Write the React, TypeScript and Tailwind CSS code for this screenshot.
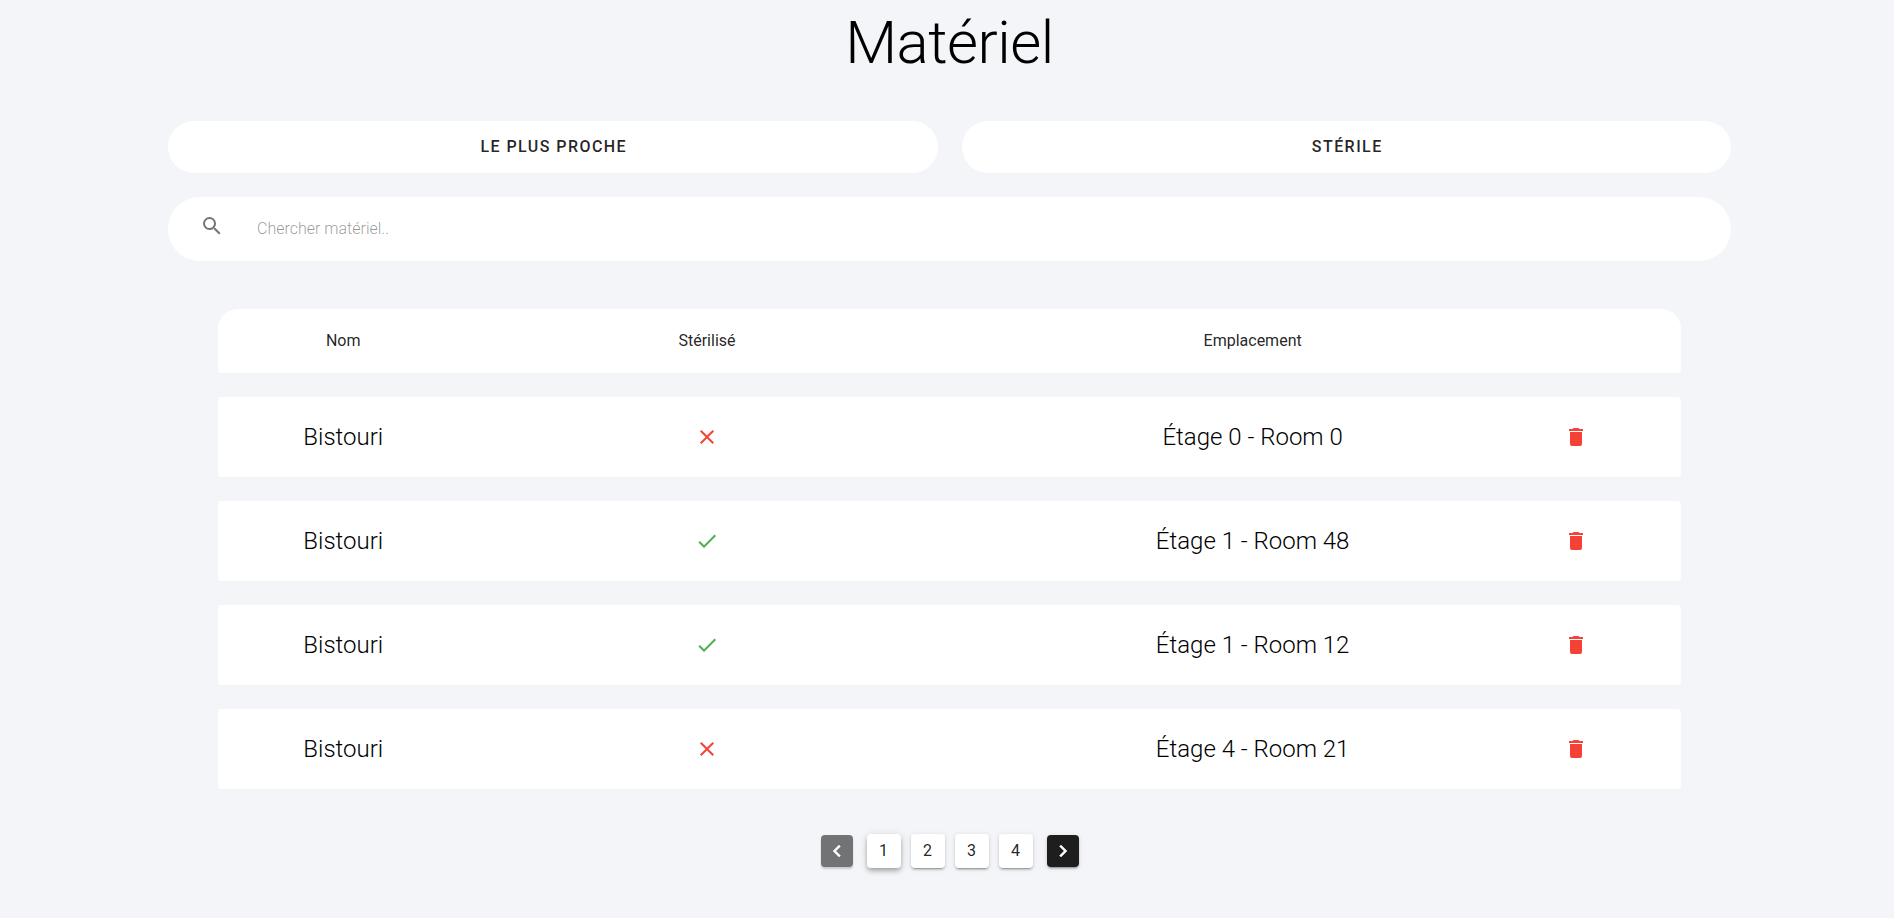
import { useState } from "react";

const icons = {
  search:
    "M9.5,3A6.5,6.5 0 0,1 16,9.5C16,11.11 15.41,12.59 14.44,13.73L14.71,14H15.5L20.5,19L19,20.5L14,15.5V14.71L13.73,14.44C12.59,15.41 11.11,16 9.5,16A6.5,6.5 0 0,1 3,9.5A6.5,6.5 0 0,1 9.5,3M9.5,5C7,5 5,7 5,9.5C5,12 7,14 9.5,14C12,14 14,12 14,9.5C14,7 12,5 9.5,5Z",
  close:
    "M19,6.41L17.59,5L12,10.59L6.41,5L5,6.41L10.59,12L5,17.59L6.41,19L12,13.41L17.59,19L19,17.59L13.41,12L19,6.41Z",
  check: "M21,7L9,19L3.5,13.5L4.91,12.09L9,16.17L19.59,5.59L21,7Z",
  trash:
    "M19,4H15.5L14.5,3H9.5L8.5,4H5V6H19M6,19A2,2 0 0,0 8,21H16A2,2 0 0,0 18,19V7H6V19Z",
  left: "M15.41,16.58L10.83,12L15.41,7.41L14,6L8,12L14,18L15.41,16.58Z",
  right: "M8.59,16.58L13.17,12L8.59,7.41L10,6L16,12L10,18L8.59,16.58Z",
};

function Icon({ name, className = "" }: { name: keyof typeof icons; className?: string }) {
  return (
    <svg viewBox="0 0 24 24" className={`size-6 shrink-0 fill-current ${className}`} aria-hidden="true">
      <path d={icons[name]} />
    </svg>
  );
}

const items = [
  { id: 1, name: "Bistouri", sterile: false, place: "Étage 0 - Room 0" },
  { id: 2, name: "Bistouri", sterile: true, place: "Étage 1 - Room 48" },
  { id: 3, name: "Bistouri", sterile: true, place: "Étage 1 - Room 12" },
  { id: 4, name: "Bistouri", sterile: false, place: "Étage 4 - Room 21" },
];

const pages = [1, 2, 3, 4];

export default function App() {
  const [page, setPage] = useState(1);
  const [query, setQuery] = useState("");

  return (
    <main className="min-h-screen bg-[#f3f5f9] pr-[163px] pb-12 pl-[168px] font-['Roboto',sans-serif] text-base text-black/87">
      <h1 className="pt-[13px] text-center text-6xl leading-[60px] font-light tracking-[-0.5px] text-black">Matériel</h1>

      <div className="mt-12 grid grid-cols-2 gap-6">
        <button type="button" className="h-[52px] rounded-full bg-white pl-[2px] font-medium tracking-[0.09em] uppercase">
          Le plus proche
        </button>
        <button type="button" className="h-[52px] rounded-full bg-white pl-[2px] font-medium tracking-[0.09em] uppercase">
          Stérile
        </button>
      </div>

      <label className="mt-6 flex h-16 items-center rounded-full bg-white pr-8 pl-8">
        <Icon name="search" className="mb-1.5 text-black/54" />
        <input
          type="text"
          aria-label="Chercher matériel"
          placeholder="Chercher matériel.."
          value={query}
          onChange={(e) => setQuery(e.target.value)}
          className="mb-0.5 ml-[33px] h-8 min-w-0 flex-1 bg-transparent font-light outline-none placeholder:text-black/42"
        />
      </label>

      <table className="mx-[50px] mt-12 flex flex-col gap-6">
        <thead className="block">
          <tr className="grid h-16 grid-cols-12 items-center rounded-t-[20px] rounded-b bg-white px-1 text-center">
            <th className="col-span-2 font-normal">Nom</th>
            <th className="col-span-4 font-normal">Stérilisé</th>
            <th className="col-span-5 font-normal">Emplacement</th>
            <td />
          </tr>
        </thead>
        <tbody className="flex flex-col gap-6">
          {items.map((item) => (
            <tr key={item.id} className="grid h-20 grid-cols-12 items-center rounded bg-white px-1 text-center text-2xl font-light text-black">
              <td className="col-span-2">{item.name}</td>
              <td className="col-span-4 flex justify-center">
                {item.sterile ? (
                  <Icon name="check" className="text-[#4caf50]" />
                ) : (
                  <Icon name="close" className="text-[#f44336]" />
                )}
              </td>
              <td className="col-span-5">{item.place}</td>
              <td className="flex">
                <button type="button" aria-label="Supprimer" className="flex size-10 items-center justify-center text-[#f44336]">
                  <Icon name="trash" />
                </button>
              </td>
            </tr>
          ))}
        </tbody>
      </table>

      <nav aria-label="Pagination" className="mt-[45px] flex items-center justify-center gap-[14px]">
        <button
          type="button"
          aria-label="Page précédente"
          onClick={() => setPage(Math.max(1, page - 1))}
          className="flex size-8 items-center justify-center rounded bg-[#727375] text-white shadow-[0_2px_2px_rgba(0,0,0,0.18)]"
        >
          <Icon name="left" className="stroke-current stroke-[0.5]" />
        </button>
        <div className="flex gap-[10px]">
          {pages.map((n) => (
            <button
              key={n}
              type="button"
              onClick={() => setPage(n)}
              className={
                n === page
                  ? "size-[34px] rounded bg-white shadow-[0_2px_4px_-1px_rgba(0,0,0,0.2),0_4px_5px_rgba(0,0,0,0.14),0_1px_10px_rgba(0,0,0,0.12)]"
                  : "size-[34px] rounded bg-white shadow-[0_3px_1px_-2px_rgba(0,0,0,0.2),0_2px_2px_rgba(0,0,0,0.14),0_1px_5px_rgba(0,0,0,0.12)]"
              }
            >
              {n}
            </button>
          ))}
        </div>
        <button
          type="button"
          aria-label="Page suivante"
          onClick={() => setPage(Math.min(pages.length, page + 1))}
          className="flex size-8 items-center justify-center rounded bg-[#1e1e1e] text-white shadow-[0_3px_1px_-2px_rgba(0,0,0,0.2),0_2px_2px_rgba(0,0,0,0.14),0_1px_5px_rgba(0,0,0,0.12)]"
        >
          <Icon name="right" className="stroke-current stroke-[0.5]" />
        </button>
      </nav>
    </main>
  );
}
